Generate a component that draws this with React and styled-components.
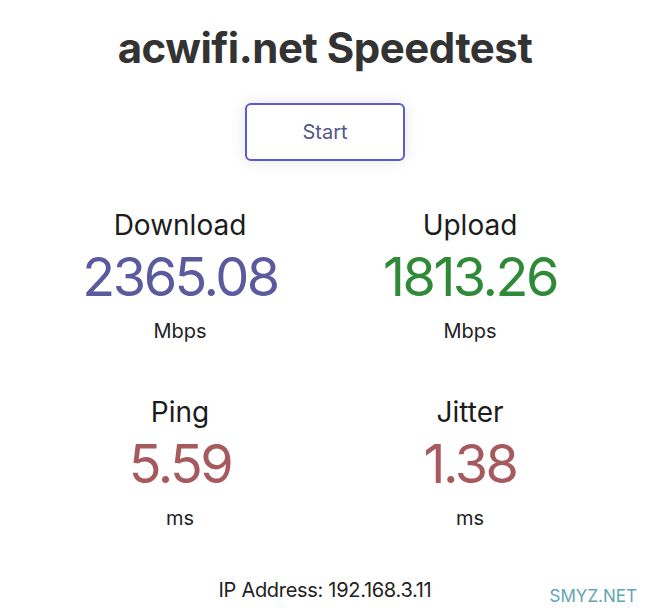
import styled, { createGlobalStyle } from "styled-components";

const GlobalStyle = createGlobalStyle`
    html, body {
        margin: 0;
        padding: 0;
        background: #fff;
    }
    body {
        font-family: Inter, "Noto Sans", sans-serif;
        color: #222;
    }
`;

const metrics = [
    { label: "Download", value: "2365.08", unit: "Mbps", color: "#5b5a9f" },
    { label: "Upload", value: "1813.26", unit: "Mbps", color: "#2f8a37" },
    { label: "Ping", value: "5.59", unit: "ms", color: "#a65a5e" },
    { label: "Jitter", value: "1.38", unit: "ms", color: "#a65a5e" },
];

function App() {
    return (
        <Page>
            <GlobalStyle />
            <Title>acwifi.net Speedtest</Title>
            <StartButton>Start</StartButton>

            <Grid>
                {metrics.map((m) => (
                    <Metric key={m.label}>
                        <Label>{m.label}</Label>
                        <Value color={m.color}>{m.value}</Value>
                        <Unit>{m.unit}</Unit>
                    </Metric>
                ))}
            </Grid>

            <Address>IP Address: 192.168.3.11</Address>
            <Watermark>SMYZ.NET</Watermark>
        </Page>
    );
}

const Page = styled.div`
    position: relative;
    width: 650px;
    height: 616px;
    display: flex;
    flex-direction: column;
    align-items: center;
    overflow: hidden;
`;

const Title = styled.h1`
    margin: 23px 0 0;
    font-size: 42px;
    line-height: 50px;
    font-weight: 700;
    color: #333;
    letter-spacing: -0.5px;
`;

const StartButton = styled.button`
    margin-top: 30px;
    width: 160px;
    height: 58px;
    border: 2px solid #5d5bd4;
    border-radius: 6px;
    background: #fff;
    box-shadow: 0 0 16px rgba(0, 0, 0, 0.1);
    font-family: Inter, "Noto Sans", sans-serif;
    font-size: 20px;
    color: #555784;
    cursor: pointer;
`;

const Grid = styled.div`
    margin-top: 47px;
    display: grid;
    grid-template-columns: 290px 290px;
    row-gap: 52px;
`;

const Metric = styled.div`
    display: flex;
    flex-direction: column;
    align-items: center;
`;

const Label = styled.div`
    font-size: 28px;
    line-height: 34px;
    color: #1c1c1c;
`;

const Value = styled.div`
    margin-top: 5px;
    font-size: 54px;
    line-height: 60px;
    font-weight: 400;
    letter-spacing: -2.5px;
    color: ${(p) => p.color};
`;

const Unit = styled.div`
    margin-top: 12px;
    font-size: 20px;
    line-height: 24px;
    color: #222;
`;

const Address = styled.div`
    margin-top: 48px;
    font-size: 20px;
    line-height: 24px;
    letter-spacing: -0.3px;
    color: #222;
`;

const Watermark = styled.div`
    position: absolute;
    right: 13px;
    bottom: 10px;
    font-size: 17px;
    color: #5fa6b3;
`;

export default App;
